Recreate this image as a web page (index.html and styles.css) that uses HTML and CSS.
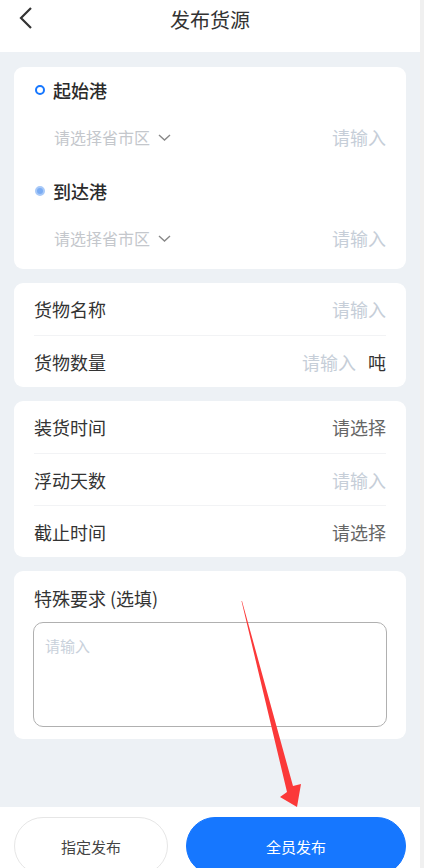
FILE: index.html
```html
<!doctype html>
<html>
<head>
  <title>发布货源</title>
  <meta charset="utf-8"/>
  <meta name="viewport" content="width=device-width, initial-scale=1"/>
  <link rel="stylesheet" href="styles.css">
</head>
<body>
  <div class="App">
    <div class="Header">
      <a class="Header__Back" href="#">
        <svg width="14" height="22" viewBox="0 0 14 22"><path d="M12 1 L2 11 L12 21" fill="none" stroke="#333" stroke-width="2.2"/></svg>
      </a>
      <h1 class="Header__Title">发布货源</h1>
    </div>

    <div class="Main">
      <div class="Card Card--Ports">
        <div class="Port">
          <div class="Port__Head"><span class="Port__Dot"></span>起始港</div>
          <div class="Port__Pick">
            <span class="Port__Area">请选择省市区
              <svg class="Port__Arrow" width="13" height="7" viewBox="0 0 13 7"><path d="M1 1 L6.5 6 L12 1" fill="none" stroke="#888" stroke-width="1.4"/></svg>
            </span>
            <input class="Field__Input" type="text" placeholder="请输入"/>
          </div>
        </div>
        <div class="Port">
          <div class="Port__Head"><span class="Port__Dot Port__Dot--End"></span>到达港</div>
          <div class="Port__Pick">
            <span class="Port__Area">请选择省市区
              <svg class="Port__Arrow" width="13" height="7" viewBox="0 0 13 7"><path d="M1 1 L6.5 6 L12 1" fill="none" stroke="#888" stroke-width="1.4"/></svg>
            </span>
            <input class="Field__Input" type="text" placeholder="请输入"/>
          </div>
        </div>
      </div>

      <div class="Card">
        <div class="Field">
          <span class="Field__Label">货物名称</span>
          <input class="Field__Input" type="text" placeholder="请输入"/>
        </div>
        <div class="Field">
          <span class="Field__Label">货物数量</span>
          <input class="Field__Input" type="text" placeholder="请输入"/>
          <span class="Field__Unit">吨</span>
        </div>
      </div>

      <div class="Card">
        <div class="Field">
          <span class="Field__Label">装货时间</span>
          <span class="Field__Select">请选择</span>
        </div>
        <div class="Field">
          <span class="Field__Label">浮动天数</span>
          <input class="Field__Input" type="text" placeholder="请输入"/>
        </div>
        <div class="Field">
          <span class="Field__Label">截止时间</span>
          <span class="Field__Select">请选择</span>
        </div>
      </div>

      <div class="Card Card--Note">
        <div class="Note__Title">特殊要求 (选填)</div>
        <textarea class="Note__Text" placeholder="请输入"></textarea>
      </div>
    </div>

    <div class="Footer">
      <button class="Footer__Button">指定发布</button>
      <button class="Footer__Button Footer__Button--Primary">全员发布</button>
    </div>

    <!-- annotation arrow -->
    <svg class="Pointer" width="420" height="868" viewBox="0 0 420 868">
      <polygon points="242,601 293,786 301,784 297,807 280,797 287,792 241.5,601" fill="#fb3939"/>
    </svg>
  </div>
</body>
</html>
```

FILE: styles.css
```css
html, body {
  margin: 0;
  padding: 0;
}
body {
  background-color: #f0f0f0;
  font-family: "Noto Sans CJK SC", "Noto Sans", sans-serif;
  color: #333;
}

.App {
  position: relative;
  width: 420px;
  height: 868px;
  overflow: hidden;
  background-color: #edf1f5;
}

.Header {
  display: flex;
  justify-content: center;
  height: 52px;
  background-color: #fff;
  position: relative;
}
.Header__Back {
  position: absolute;
  left: 19px;
  top: 7px;
}
.Header__Title {
  margin: 0;
  font-size: 20px;
  font-weight: normal;
  line-height: 40px;
  color: #333;
}

.Main {
  height: 755px;
  padding: 15px 14px 0;
  box-sizing: border-box;
  display: flex;
  flex-direction: column;
  gap: 14px;
}

.Card {
  background-color: #fff;
  border-radius: 9px;
  padding: 0 20px;
}

.Port {
  padding-bottom: 11px;
}
.Port__Head {
  display: flex;
  align-items: center;
  height: 46px;
  padding-bottom: 4px;
  font-size: 18px;
  font-weight: 500;
  color: #2b2b2b;
}
.Port__Dot {
  width: 6px;
  height: 6px;
  border: 2.5px solid #1677ff;
  border-radius: 50%;
  margin: 0 8px 0 1px;
}
.Port__Dot--End {
  border-color: #a8c9f8;
  background-color: #7aacf3;
}
.Port__Pick {
  display: flex;
  align-items: center;
  justify-content: space-between;
  height: 40px;
  padding-left: 20px;
}
.Port__Area {
  display: flex;
  align-items: center;
  font-size: 16px;
  color: #c4c7cc;
}
.Port__Arrow {
  margin-left: 8px;
}

.Field {
  display: flex;
  align-items: center;
  height: 52px;
  border-top: 1px solid #f2f3f5;
  box-sizing: border-box;
  font-size: 18px;
}
.Field:first-child {
  border-top: none;
}
.Field__Label {
  flex: none;
  color: #333;
}
.Field__Input {
  flex: 1;
  min-width: 0;
  border: none;
  outline: none;
  padding: 0;
  background: transparent;
  text-align: right;
  font-family: inherit;
  font-size: 18px;
  color: #333;
}
.Field__Input::placeholder {
  color: #c6ced8;
}
.Field__Select {
  margin-left: auto;
  color: #666;
}
.Field__Unit {
  margin-left: 12px;
  color: #333;
}

.Card--Note {
  padding: 15px 19px 12px;
}
.Note__Title {
  font-size: 18px;
  line-height: 24px;
  margin: 0 0 12px 1px;
  color: #333;
}
.Note__Text {
  display: block;
  width: 100%;
  height: 105px;
  box-sizing: border-box;
  border: 1.5px solid #b0b0b0;
  border-radius: 10px;
  padding: 12px 11px;
  resize: none;
  outline: none;
  font-family: inherit;
  font-size: 15px;
  line-height: 22px;
}
.Note__Text::placeholder {
  color: #c9d1db;
}

.Footer {
  display: flex;
  gap: 18px;
  padding: 10px 14px;
  background-color: #fff;
}
.Footer__Button {
  height: 58px;
  border-radius: 29px;
  border: 1px solid #e6e6e6;
  background-color: #fff;
  color: #444;
  font-family: inherit;
  font-size: 15px;
  width: 154px;
  flex: none;
}
.Footer__Button--Primary {
  flex: 1;
  border-color: #1677ff;
  background-color: #1677ff;
  color: #fff;
}

.Pointer {
  position: absolute;
  left: 0;
  top: 0;
  pointer-events: none;
}
```
